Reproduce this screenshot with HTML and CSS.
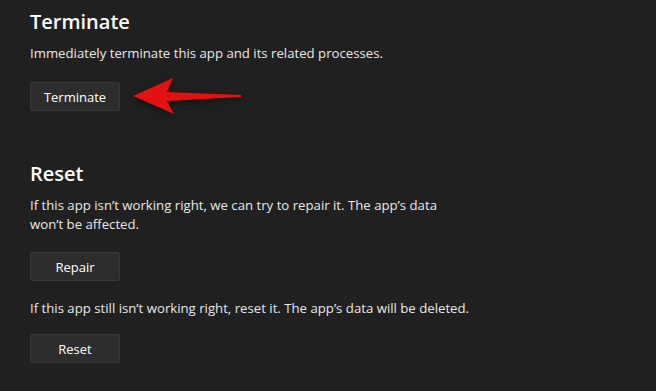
FILE: index.html
```html
<!DOCTYPE html>
<html>
<head>
<meta charset="utf-8">
<link rel="stylesheet" href="styles.css">
</head>
<body>
<main class="page">
  <section class="section terminate">
    <h2 class="title">Terminate</h2>
    <p class="desc">Immediately terminate this app and its related processes.</p>
    <div class="btn-row">
      <button class="btn">Terminate</button>
      <svg class="arrow" width="120" height="44" viewBox="0 0 120 44">
        <polygon points="2,19 42,1 36,15 110,18 110,20 36,24 43,37" fill="#e31111"/>
      </svg>
    </div>
  </section>
  <section class="section reset">
    <h2 class="title">Reset</h2>
    <p class="desc">If this app isn’t working right, we can try to repair it. The app’s data won’t be affected.</p>
    <button class="btn">Repair</button>
    <p class="desc desc-2">If this app still isn’t working right, reset it. The app’s data will be deleted.</p>
    <button class="btn btn-last">Reset</button>
  </section>
</main>
</body>
</html>
```
FILE: styles.css
```css
html, body {
  margin: 0;
  padding: 0;
  background: #202020;
}
body {
  width: 656px;
  height: 391px;
  overflow: hidden;
  font-family: "Open Sans", "Noto Sans", sans-serif;
  color: #ffffff;
}
.page {
  padding: 8px 0 0 30px;
  display: flex;
  flex-direction: column;
}
.section {
  display: flex;
  flex-direction: column;
  align-items: flex-start;
}
.title {
  margin: 0;
  font-size: 20px;
  line-height: 28px;
  font-weight: 600;
}
.desc {
  margin: 8px 0 0 0;
  font-size: 13.2px;
  line-height: 19px;
  color: #e8e8e8;
  max-width: 430px;
}
.btn-row {
  position: relative;
  margin-top: 19px;
}
.btn {
  display: block;
  width: 90px;
  height: 29px;
  background: #2d2d2d;
  border: 1px solid #383838;
  border-radius: 2px;
  color: #ffffff;
  font-family: inherit;
  font-size: 13px;
  padding: 0;
}
.reset .btn {
  margin-top: 18px;
}
.reset .btn-last {
  margin-top: 16px;
}
.reset {
  margin-top: 49px;
}
.desc-2 {
  margin-top: 18px;
  max-width: none;
}
.arrow {
  position: absolute;
  left: 101px;
  top: -5px;
  filter: drop-shadow(0 2px 3px rgba(0,0,0,0.5));
}
```
